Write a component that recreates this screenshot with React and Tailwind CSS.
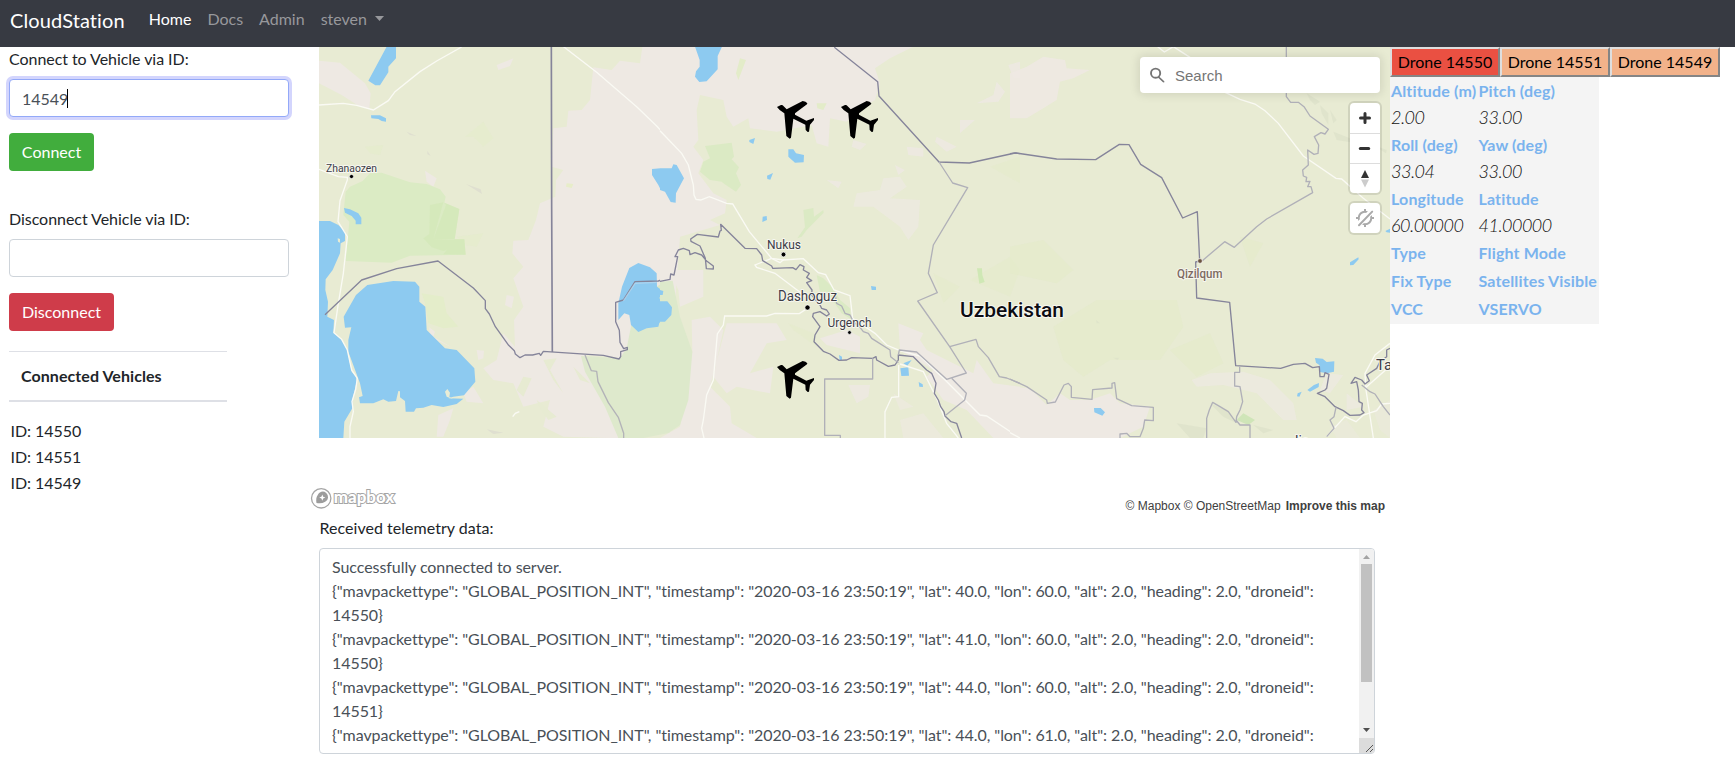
import React from "react";

const WATER = "#8dcaf0";

const telemetry = [
  "Successfully connected to server.",
  '{"mavpackettype": "GLOBAL_POSITION_INT", "timestamp": "2020-03-16 23:50:19", "lat": 40.0, "lon": 60.0, "alt": 2.0, "heading": 2.0, "droneid":',
  "14550}",
  '{"mavpackettype": "GLOBAL_POSITION_INT", "timestamp": "2020-03-16 23:50:19", "lat": 41.0, "lon": 60.0, "alt": 2.0, "heading": 2.0, "droneid":',
  "14550}",
  '{"mavpackettype": "GLOBAL_POSITION_INT", "timestamp": "2020-03-16 23:50:19", "lat": 44.0, "lon": 60.0, "alt": 2.0, "heading": 2.0, "droneid":',
  "14551}",
  '{"mavpackettype": "GLOBAL_POSITION_INT", "timestamp": "2020-03-16 23:50:19", "lat": 44.0, "lon": 61.0, "alt": 2.0, "heading": 2.0, "droneid":',
];

function Plane({ x, y }) {
  return (
    <path
      transform={`translate(${x} ${y})`}
      fill="#000"
      d="M0 18 L12 12 Q17 11 20 16 L29 25 L77 0 Q87 1 91 7 L90 10 L54 37 L54 41 L88 59 L111 51 L111 57 L99 71 L96 92 L92 93 L86 87 L85 71 L49 53 L42 110 L38 113 L28 105 L22 37 L8 27 Z"
    />
  );
}

function MapWest() {
  return (
    <g transform="translate(310 40) scale(.333333)">
      {/* desert tint */}
      <g fill="#eee9e3">
        <path d="M27 62 L90 68 165 130 182 160 178 205 150 200 95 165 27 130Z" />
        <path d="M1000 0 L990 70 930 62 905 90 850 82 840 180 815 210 775 212 770 260 730 265 725 380 760 390 738 420 736 470 690 490 678 540 655 600 610 602 607 640 640 680 610 715 640 800 612 840 615 920 580 880 560 960 520 985 550 1020 610 1030 640 1100 720 1080 700 1160 760 1190 930 1195 905 1110 825 945 910 950 1080 990 1080 0Z" />
        <path d="M345 392 L380 415 370 440 350 425Z M560 75 L610 55 600 78 565 90Z M358 862 L375 875 370 890 430 925 360 890Z M460 1060 L490 1040 520 1090 470 1085Z M385 1125 L430 1105 420 1140 400 1190 380 1190Z" />
        <path d="M500 930 L522 932 520 955 505 960Z M590 765 L612 770 605 805 585 795Z" />
      </g>
      <g fill="#e7ebd2">
        <path d="M640 1010 L665 1015 640 1070 620 1050Z M680 1080 L740 1130 715 1140 690 1105Z M700 960 L740 955 720 990 760 1060 730 1020Z M790 980 L840 1030 810 1020Z" />
        <path d="M770 430 L790 432 785 444 768 440Z" fill="#e7edc9" />
      </g>
      <g fill="#e4edca">
        <path d="M335 760 L400 770 410 820 445 860 400 865 355 850 345 790Z" />
        <path d="M465 290 L520 245 550 295 520 320 490 290Z M165 320 L220 315 210 345 180 340Z M440 590 L520 580 500 620 470 615Z" opacity=".5" />
      </g>
      {/* parks */}
      <path d="M107 455 L120 440 158 423 180 400 215 398 300 427 350 432 390 448 407 470 403 488 448 507 434 598 463 598 467 644 300 647 245 668 107 663 118 545 100 525Z" fill="#dbebc4" />
      <path d="M360 495 L400 487 370 598 432 600 430 622 400 633 365 622 340 595 358 582Z M434 598 L463 598 467 644 400 643Z M434 598 L448 507 403 488 408 495 370 598Z" fill="#d2e8b7" opacity=".65" />
      <path d="M813 948 L930 955 950 925 965 850 1080 790 1080 1178 1000 1194 925 1194 885 1100 825 995Z" fill="#dee9cc" />
      <path d="M1040 740 L1080 715 1080 820 1040 790Z" fill="#dee9c4" />
      {/* lakes */}
      <g fill={WATER}>
        <path d="M230 20 L258 20 258 55 235 80 235 97 210 136 196 136 175 122Z" />
        <path d="M183 226 L210 226 228 235 228 245 215 243 205 237 184 235Z" />
        <path d="M102 504 L120 508 145 520 154 533 154 553 137 553 137 542 125 528 105 518Z" />
        <path d="M27 543 L60 543 85 555 105 575 105 603 92 610 90 640 68 690 47 718 46 750 54 785 52 830 72 840 70 878 95 900 112 930 125 995 138 1010 140 1025 127 1080 127 1105 103 1145 100 1194 27 1194Z" />
        <path d="M172 735 L250 723 315 725 328 740 328 785 346 800 350 870 405 925 440 930 493 985 496 1025 462 1066 430 1070 415 1075 460 1076 440 1092 400 1101 365 1095 340 1103 318 1105 312 1115 287 1115 285 1083 270 1072 270 1054 265 1053 258 1083 235 1085 220 1078 190 1090 150 1090 147 1072 158 1068 150 1030 115 935 115 900 124 862 105 863 101 830 138 765Z" />
        <path d="M1026 387 L1060 384 1080 392 1080 487 1060 465 1045 435 1026 405Z" />
        <path d="M958 684 L985 669 1020 682 1040 700 1041 740 1058 752 1048 775 1080 795 1080 843 1048 848 1045 860 1010 865 985 876 963 855 958 825 943 820 925 840 925 790 936 740Z" />
      </g>
      <path d="M412 1047 L420 1058 418 1070 430 1078 410 1070 405 1055Z" fill="#e9ecd5" />
      <path d="M83 595 L90 597 90 608 84 605Z" fill="#e7ebd2" />
      {/* roads */}
      <g fill="none" stroke="#fafaf4" strokeWidth="4">
        <path d="M27 195 L100 190 140 196 190 210 235 182 255 155 330 95 380 63 455 21" />
        <path d="M758 18 L860 97 980 200 1040 258 1080 302" />
        <path d="M27 388 L85 410 112 412 112 420 90 482 84 545 112 590 100 700 85 790 72 878 95 898 112 930 125 990 142 1015 137 1048 126 1085 130 1115 120 1160 120 1194" />
        <path d="M608 1130 L616 1120 628 1115" />
      </g>
      {/* borders */}
      <g fill="none" stroke="#85849a" strokeWidth="4" strokeLinejoin="round">
        <path d="M724 20 L725 500 727 936" strokeWidth="5" />
        <path d="M45 824 L155 720 260 686 384 663 490 744 526 782 526 806 538 822 556 860 596 916 613 932 616 942 630 953 645 945 668 945 688 940 692 946 700 934 880 946 927 957 932 950 932 935 952 929 952 922 941 926 930 907 928 871 917 845 917 787 940 780 975 725 1045 723 1065 716 1080 718" />
        <path d="M825 945 L844 992 860 994 864 1025 895 1088 925 1132 941 1180 941 1194" stroke="#b3b3b8" />
      </g>
      <path d="M940 783 L975 730 1040 727" fill="none" stroke="#b8d9ef" strokeWidth="4" opacity=".7" />
      <path d="M290 275 L320 288 300 285Z M352 332 L362 348 352 342Z M468 432 L512 448 516 462Z M530 1168 L580 1178 550 1182Z" fill="#dfdfd0" />
    </g>
  );
}

function MapCentral() {
  return (
    <g transform="translate(660 40) scale(.333333)">
      <g fill="#eee9e3">
        <path d="M30 0 L760 20 690 55 645 85 660 130 645 180 590 215 560 245 510 235 505 320 470 310 455 255 350 275 270 265 265 235 220 260 200 230 190 180 120 165 110 210 115 300 100 320 130 360 115 400 160 460 200 480 195 520 150 540 180 555 60 590 30 1000 0 720 0 20Z" />
        <path d="M30 690 L130 690 130 770 60 800 55 750Z M95 840 L150 830 190 870 160 1010 200 1060 230 1040 330 1060 340 980 270 1000 320 910 380 900 350 850 200 850 150 1040 210 1100 215 1150 290 1194 0 1194 60 1160 97 935Z" />
        <path d="M480 895 L560 870 600 890 600 940 500 915Z M715 850 L790 880 780 900 800 930 860 960 940 1000 950 960 1000 1030 1080 1040 1080 1194 1000 1194 920 1110 850 1080 800 1010 820 990 720 930Z" />
        <path d="M590 460 L660 450 670 415 720 410 740 440 690 475 780 480 775 560 745 600 720 560 640 500 580 500Z" opacity=".7" />
        <path d="M1010 125 L1035 155 1015 185 950 190 1000 165Z M1045 75 L1080 65 1080 115 1060 115Z M830 290 L890 320 860 335 825 305Z M900 240 L945 240 900 280Z M740 320 L790 325 790 350 745 345Z M705 375 L735 390 715 405Z M580 300 L620 312 600 330 575 320Z M565 1035 L630 1035 625 1070 590 1090Z M500 420 L545 425 535 445Z" opacity=".8" />
        <path d="M700 1060 L760 1100 720 1110Z M720 1140 L790 1120 850 1194 730 1194Z" opacity=".6" />
      </g>
      <g fill="#e3ecc9">
        <path d="M385 850 L460 880 470 920 400 870Z M930 720 L1050 650 1080 690 1050 770Z M820 700 L900 740 850 790Z M990 380 L1080 350 1080 430Z" opacity=".4" />
        <path d="M240 55 L258 60 235 120 228 100Z M470 190 L500 190 490 210 472 205Z" />
      </g>
      <g fill="#dbeac4">
        <path d="M135 318 L215 308 222 350 215 358 237 382 228 400 243 435 228 455 190 430 185 425 150 420 120 395 130 365 150 355Z" />
        <path d="M430 510 L460 504 462 530 490 510 491 518 440 570 425 590 412 595 435 562Z M470 705 L490 715 520 745 540 780 570 805 573 838 545 820 500 755 480 755Z" />
        <path d="M0 725 L38 722 60 830 97 935 85 1080 60 1155 30 1175 0 1180Z" fill="#dde9cb" />
        <path d="M951 685 L966 685 967 705 974 726 958 731Z" fill="#cfe8b5" />
      </g>
      <g fill={WATER}>
        <path d="M105 20 L186 20 173 48 173 88 140 124 118 126 105 110 108 94 119 80 119 60Z" />
        <path d="M0 385 L35 385 40 373 50 375 72 415 48 460 47 488 32 486 15 455 0 450Z" />
        <path d="M385 328 L400 328 408 340 432 345 431 367 405 368 385 350Z M268 300 L285 294 280 312 268 306Z M321 407 L339 399 331 419 322 417Z M308 530 L320 528 321 540 307 546Z M633 738 L648 740 648 750 635 750Z M537 945 L546 950 546 960 539 960Z M721 985 L745 982 747 1007 724 1008Z M730 970 L755 960 742 977Z M776 1026 L788 1033 789 1041 778 1040Z" />
        <path d="M0 784 L22 784 36 802 34 825 15 845 0 845Z M0 750 L10 753 8 765 0 765Z" />
      </g>
      <g fill="none" stroke="#fafaf4" strokeWidth="4">
        <path d="M0 272 L65 340 85 375 100 435 102 465 108 478 122 480 148 470 200 490 218 492 268 575 335 655 370 660 430 656 475 698 497 704 522 750 570 767 578 835 645 880 680 915 720 932 780 948 850 1015 960 1125 980 1128 1080 1194" />
        <path d="M335 655 L285 675 290 682 345 700 440 772" />
        <path d="M442 805 L418 821 345 820 320 828 194 828 190 855 172 882 160 1020 140 1065 130 1140 125 1165 132 1194" />
        <path d="M716 975 L716 1070 695 1072 675 1115 675 1194 M720 972 L790 995 830 1075 860 1150 895 1194" />
        <path d="M335 655 L360 668 372 658" />
      </g>
      <g fill="none" stroke="#85849a" strokeWidth="4" strokeLinejoin="round">
        <path d="M523 22 L653 125 657 168 837 366 928 369 1065 339 1080 341" />
        <path d="M0 724 L30 718 32 702 42 705 53 650 45 650 55 630 70 625 88 632 90 644 105 638 125 645 140 663 160 678 160 687 139 686 136 655 120 618 93 604 92 597 112 583 175 591 180 573 184 571 182 553 255 625 290 626 305 645 308 662 335 678 338 685 398 683 408 689 420 674 432 680 430 690 448 700 440 712 455 722 440 728 456 750 455 765 480 795 485 805 500 810 508 822 500 828 480 815 460 820 458 830 480 860 465 885 462 905 490 934 510 942 537 961 560 960 575 953 638 955 648 950 650 960 685 979 705 975 715 960 715 945 760 950 790 980 800 990 815 1000 828 1030 823 1060 835 1080 842 1100 852 1115 855 1128 873 1145 890 1150 905 1194" />
        <g stroke="#b0b0b8">
          <path d="M837 366 L878 429 923 443 820 615 805 700 832 758 773 783 869 920 919 999 860 1018 770 936 718 930 715 945" />
          <path d="M869 920 L948 898 955 920 985 953 1018 1010 1040 1014 1080 1030" />
          <path d="M875 1015 L919 1060 914 1080 855 1127" />
          <path d="M638 955 L638 1017 494 1017 494 1186 541 1186 541 1194" />
          <path d="M525 760 L530 790 545 798 555 820 570 825 580 845 600 862 610 875 625 880 635 895 690 930 692 950 715 968" />
        </g>
      </g>
    </g>
  );
}

function MapEast() {
  return (
    <g transform="translate(1010 40) scale(.333333)">
      <g fill="#eee9e3">
        <path d="M0 100 L50 80 100 50 165 60 170 85 240 90 190 115 150 125 140 180 100 205 50 235 0 235Z" opacity=".85" />
        <path d="M0 1040 L60 1045 110 1095 150 1060 180 1080 240 1080 300 1060 330 1090 420 1100 400 1160 330 1194 0 1194Z" />
        <path d="M545 1020 L600 1000 700 995 780 1020 850 1090 860 1140 820 1140 740 1060 640 1035 560 1040Z M950 1000 L1000 1005 960 1060 930 1050Z M1010 1060 L1060 1100 1010 1110Z" opacity=".7" />
        <path d="M1090 1110 L1140 1080 1140 1194 1110 1170Z M960 1160 L1010 1140 1050 1194 980 1194Z" opacity=".4" />
      </g>
      <g fill="#e3ecc8">
        <path d="M0 620 L100 600 190 690 140 730 0 700Z M130 860 L260 780 500 780 520 860 450 960 300 960 220 1010 160 960Z M480 930 L600 880 640 970 560 1010Z M690 590 L760 610 720 680Z" opacity=".5" />
      </g>
      <g fill="#dadfc8">
        <path d="M890 160 L930 185 915 195 900 180Z M930 195 L955 220 955 255 935 220Z M960 210 L980 240 970 250Z M970 275 L1020 295 1040 310 980 300Z M1090 315 L1130 330 1128 340Z M500 1150 L590 1165 580 1194 540 1194Z M600 1090 L650 1110 680 1150 640 1130Z M730 1155 L790 1170 760 1180Z M258 840 L270 850 260 850Z M310 953 L328 953 322 960Z" opacity=".6" />
        <path d="M680 1140 L700 1120 735 1140 715 1155Z" fill="#cfe5b8" />
      </g>
      <g fill={WATER}>
        <path d="M915 954 L938 956 950 966 973 964 972 995 950 1000 930 996 928 975 918 968Z" />
        <path d="M252 1104 L272 1104 285 1117 277 1127 253 1117Z M863 1060 L875 1055 868 1070 861 1069Z M892 1050 L912 1035 927 1029 926 1041 900 1055Z M1020 667 L1045 652 1046 658 1030 675 1020 676Z M1126 573 L1140 566 1140 578 1130 577Z" />
      </g>
      <g fill="none" stroke="#fafaf4" strokeWidth="4">
        <path d="M443 20 L463 36 490 20 540 52" />
        <path d="M620 145 L690 178 735 192 765 212 805 250 880 348 978 415 995 417 1060 475 1140 537" />
        <path d="M950 1190 L1005 1130 1038 1145 1060 1125 1100 1112 1115 1092 1140 1090 M1140 910 L1095 945 1065 1000 1068 1050 1090 1194 M1065 1045 L1140 978" />
        <path d="M0 1178 L30 1194" />
      </g>
      <g fill="none" stroke="#85849a" strokeWidth="4" strokeLinejoin="round">
        <path d="M0 341 L18 339 140 357 257 359 328 313 357 314 392 373 455 413 518 534 562 515 569 663 557 666 560 774 659 787 677 977 812 985 850 973 885 970 908 983 928 980 930 1010 942 1010 945 998 957 1003 950 1045 945 1050 922 1060 945 1070 975 1100 1000 1112 1020 1126 1050 1125 1062 1118 1055 1110 1057 1090 1047 1085 1045 1050 1040 1025 1023 1030 1035 1012 1055 1020 1065 1032 1078 1022 1070 1005 1100 985 1110 965 1130 950 1130 930 1140 925" />
        <g stroke="#b0b0b8">
          <path d="M829 20 L829 170 842 187 865 187 882 200 900 228 955 268 945 282 933 278 913 290 926 315 924 340 912 343 893 330 895 375 878 390 880 408 890 412 888 425 900 424 893 440 903 440 908 458 770 537 740 560 673 622 644 605 577 662" />
          <path d="M0 1017 L50 1040 110 1080 112 1090 136 1086 162 1035 175 1030 184 1040 184 1072 246 1078 248 1049 306 1044 306 1030 314 1028 320 1076 365 1097 430 1102 430 1142 404 1140 400 1165 390 1190 360 1190 350 1180 330 1182 330 1194" />
          <path d="M689 980 L689 997 674 997 674 1038 690 1040 698 1085 690 1110 680 1130 678 1147 655 1115 630 1100 608 1087 598 1110 590 1135 590 1194 M678 1140 L690 1155 720 1155 720 1194" />
          <path d="M978 1102 L972 1130 960 1140 972 1165 950 1190 M1055 1035 L1080 1055 1095 1062 1110 1085 1120 1100 1140 1125" />
        </g>
      </g>
    </g>
  );
}

function MapCanvas() {
  return (
    <svg className="block h-[391px] w-[1071px]" viewBox="319 47 1071 391">
      <rect x="319" y="47" width="1071" height="391" fill="#e8ebd3" />
      <MapWest />
      <MapCentral />
      <MapEast />
      <g
        fontFamily="Roboto, 'Open Sans', sans-serif"
        fill="#3c3c46"
        stroke="#f7f7f0"
        strokeWidth="2"
        strokeLinejoin="round"
        paintOrder="stroke"
      >
        <text x="326" y="171.500" fontSize="11.500" textLength="51" lengthAdjust="spacingAndGlyphs">Zhanaozen</text>
        <text x="767" y="248.500" fontSize="13.500" textLength="34" lengthAdjust="spacingAndGlyphs">Nukus</text>
        <text x="778" y="301" fontSize="14.500" textLength="59" lengthAdjust="spacingAndGlyphs">Dashoguz</text>
        <text x="827.500" y="327" fontSize="13" textLength="44" lengthAdjust="spacingAndGlyphs">Urgench</text>
        <text x="1177" y="278" fontSize="12.500" fontWeight="500" fill="#7d6a62" textLength="45.500" lengthAdjust="spacingAndGlyphs">Qizilqum</text>
        <text x="1376" y="369.500" fontSize="15">Ta</text>
        <text x="1295" y="446" fontSize="14">lis</text>
        <text x="960" y="317" fontSize="21" fontWeight="500" fill="#0c0c12" textLength="104" lengthAdjust="spacingAndGlyphs">Uzbekistan</text>
      </g>
      <g stroke="#fff" strokeWidth=".7">
        <circle cx="351.500" cy="176.500" r="2.100" />
        <circle cx="783.500" cy="254.500" r="2.400" />
        <circle cx="807.500" cy="307.500" r="2.600" />
        <circle cx="849.500" cy="332.500" r="1.900" />
        <circle cx="1200" cy="261" r="2.400" fill="#6b5440" />
      </g>
      <g transform="translate(660 40) scale(.333333)">
        <Plane x={351} y={183} />
        <Plane x={543} y={183} />
        <Plane x={351} y={963} />
      </g>
    </svg>
  );
}

function MapControls() {
  return (
    <div className="absolute right-[10px] top-[10px] flex flex-col items-end">
      <div className="flex h-9 w-60 items-center rounded bg-white pl-[9px] shadow-[0_0_10px_2px_rgba(0,0,0,.1)]">
        <svg className="mt-px h-[18px] w-[18px]" viewBox="0 0 18 18" fill="#757575">
          <circle cx="6.600" cy="6.200" r="4.600" fill="none" stroke="#757575" strokeWidth="1.900" />
          <path d="M9.600 9 L15.300 14.200 Q15.800 15.800 14 15.300 L8.600 10.200Z" />
        </svg>
        <span className="ml-[8px] mt-[2px] font-['Liberation_Sans',sans-serif] text-[15px] leading-5 text-[#757575]">Search</span>
      </div>
      <div className="mt-[10px] flex w-[30px] flex-col rounded bg-white shadow-[0_0_0_2px_rgba(0,0,0,.1)]">
        <svg className="h-[30px] w-[30px]" viewBox="0 0 30 30" stroke="#333" strokeWidth="3" strokeLinecap="round">
          <path d="M10.500 15 H19.500 M15 10.500 V19.500" />
        </svg>
        <svg className="h-[30px] w-[30px] border-t border-[#ddd]" viewBox="0 0 30 29" stroke="#333" strokeWidth="3" strokeLinecap="round">
          <path d="M10.300 14.500 H18.700" />
        </svg>
        <svg className="h-[30px] w-[30px] border-t border-[#ddd]" viewBox="0 0 30 29">
          <path d="M11 14 L15 6 L19 14Z" fill="#333" />
          <path d="M11 15.500 L15 23.500 L19 15.500Z" fill="#ccc" />
        </svg>
      </div>
      <svg className="mt-[10px] h-[30px] w-[30px] rounded bg-white shadow-[0_0_0_2px_rgba(0,0,0,.1)]" viewBox="0 0 30 30" fill="none" stroke="#aaa" strokeWidth="2">
        <circle cx="15" cy="15" r="6.300" />
        <path d="M15 6 V9 M15 21 V24 M6 15 H9 M21 15 H24" />
        <path d="M8 22 L22 8" stroke="#fff" strokeWidth="5.500" />
        <path d="M9 22.200 L22.200 8.600" strokeLinecap="round" />
      </svg>
    </div>
  );
}

function MapboxLogo() {
  return (
    <svg className="-ml-[9px] mb-[2px] h-6 w-[88px]" viewBox="0 0 88 24">
      <circle cx="11.200" cy="12.300" r="9.700" fill="#fff" stroke="#a5a5a5" strokeWidth="1.300" />
      <path d="M6.500 17 Q5.600 12 7.600 9.200 A5.400 5.400 0 1 1 15.200 15.800 Q11.500 18 6.500 17Z" fill="#9c9c9c" />
      <path d="M12.300 8.500 L13.200 10.700 15.400 11.600 13.200 12.500 12.300 14.700 11.400 12.500 9.200 11.600 11.400 10.700Z" fill="#fff" />
      <text x="23.800" y="16.500" fontFamily="Lato, sans-serif" fontWeight="900" fontSize="17" fill="#fff" stroke="#a5a5a5" strokeWidth="2" paintOrder="stroke" textLength="60.500" lengthAdjust="spacingAndGlyphs">
        mapbox
      </text>
    </svg>
  );
}

function Navbar() {
  return (
    <nav className="flex h-[47px] items-start bg-[#373a42] pl-[10px] text-white">
      <span className="mt-[5px] text-[20px] leading-[30px] tracking-[.1px]">CloudStation</span>
      <div className="ml-6 mt-[7px] flex gap-4 leading-6 text-[#97989c]">
        <span className="text-white">Home</span>
        <span>Docs</span>
        <span>Admin</span>
        <span className="flex">
          steven
          <svg className="ml-2 mt-[9px] h-[5px] w-[9px]" viewBox="0 0 9 5">
            <path d="M0 0 H9 L4.500 5Z" fill="currentColor" />
          </svg>
        </span>
      </div>
    </nav>
  );
}

function Sidebar() {
  return (
    <aside className="flex w-[319px] shrink-0 flex-col items-start pl-[9px]">
      <label className="leading-6 tracking-[-.05px]">Connect to Vehicle via ID:</label>
      <div className="mt-2 flex h-[38px] w-[280px] items-center rounded border border-[#93a9f8] bg-white pl-3 pt-px text-[#495057] shadow-[0_0_0_3px_#d3d5fd]">
        14549
        <span className="-ml-px -mt-px h-[19px] w-px bg-black" />
      </div>
      <button className="mt-4 h-[38px] w-[85px] rounded bg-[#41ad3d] text-white">Connect</button>
      <label className="mt-9 leading-6 tracking-[-.04px]">Disconnect Vehicle via ID:</label>
      <div className="mt-2 h-[38px] w-[280px] rounded border border-[#ced4da] bg-white" />
      <button className="mt-4 h-[38px] w-[105px] rounded bg-[#cf3c4a] text-white">Disconnect</button>
      <div className="mt-5 flex h-[51px] w-[218px] items-center border-b-2 border-t border-[#dee0e6] pl-3 font-bold tracking-[.07px]">
        Connected Vehicles
      </div>
      <ul className="mt-4 pl-[1.500px] leading-[26px] tracking-[-.05px]">
        <li>ID: 14550</li>
        <li>ID: 14551</li>
        <li>ID: 14549</li>
      </ul>
    </aside>
  );
}

function Telemetry() {
  return (
    <section>
      <div className="mt-1 pl-[.5px] leading-6 tracking-[.03px]">Received telemetry data:</div>
      <div className="mt-2 flex h-[206px] w-[1056px] overflow-hidden rounded border border-[#ced4da]">
        <div className="h-full flex-1 overflow-hidden whitespace-nowrap pl-3 pt-[6px] leading-6 tracking-[-.066px] text-[#495057]">
          {telemetry.map((line, i) => (
            <div key={i}>{line}</div>
          ))}
        </div>
        <div className="flex w-[15px] flex-col items-center bg-[#f1f1f1]">
          <svg className="h-[15px] w-[15px]" viewBox="0 0 15 15">
            <path d="M4 10 L7.500 6 L11 10Z" fill="#a3a3a3" />
          </svg>
          <div className="h-[118px] w-[11px] bg-[#c1c1c1]" />
          <svg className="mt-auto h-[15px] w-[15px]" viewBox="0 0 15 15">
            <path d="M4 5 H11 L7.500 9Z" fill="#505050" />
          </svg>
          <svg className="h-[15px] w-[15px] bg-[#dcdcdc]" viewBox="0 0 15 15" stroke="#555" strokeWidth="1">
            <path d="M7 14 L14 7 M11 14 L14 11" />
          </svg>
        </div>
      </div>
    </section>
  );
}

const readings = [
  [["Altitude (m)", "2.00"], ["Pitch (deg)", "33.00"]],
  [["Roll (deg)", "33.04"], ["Yaw (deg)", "33.00"]],
  [["Longitude", "60.00000"], ["Latitude", "41.00000"]],
  [["Type"], ["Flight Mode"]],
  [["Fix Type"], ["Satellites Visible"]],
  [["VCC"], ["VSERVO"]],
];

function DronePanel() {
  return (
    <aside className="w-[345px]">
      <div className="flex text-black">
        <button className="h-[30px] w-[110px] border-2 border-b-[#858585] border-l-[#dedede] border-r-[#858585] border-t-[#dedede] bg-[#ea5042]">Drone 14550</button>
        <button className="h-[30px] w-[110px] border-2 border-b-[#858585] border-l-[#dedede] border-r-[#858585] border-t-[#dedede] bg-[#f2b28a]">Drone 14551</button>
        <button className="h-[30px] w-[110px] border-2 border-b-[#858585] border-l-[#dedede] border-r-[#858585] border-t-[#dedede] bg-[#f2b28a]">Drone 14549</button>
      </div>
      <div className="flex w-[209px] flex-col bg-[#f4f4f4] pb-px pl-px">
        {readings.map((row, i) => (
          <div key={i} className="flex">
            {row.map(([label, value], j) => (
              <div key={label} className={j === 0 ? "w-[87.5px] whitespace-nowrap" : "whitespace-nowrap"}>
                <div className="h-7 font-bold leading-7 tracking-[.15px] text-[#7ab3ee]">{label}</div>
                {value && <div className="h-[26px] text-[18px] font-light italic leading-6 tracking-[-.5px] text-[#111]">{value}</div>}
              </div>
            ))}
          </div>
        ))}
      </div>
    </aside>
  );
}

export default function App() {
  return (
    <div className="h-[783px] w-[1735px] overflow-hidden bg-white font-[Lato,sans-serif] text-[16px] text-[#212529] [font-variant-ligatures:none]">
      <Navbar />
      <div className="flex">
        <Sidebar />
        <main className="w-[1071px] shrink-0">
          <div className="relative">
            <MapCanvas />
            <MapControls />
          </div>
          <div className="flex h-[74px] items-end justify-between">
            <MapboxLogo />
            <div className="-mb-px flex h-[14px] items-center gap-[5px] pr-[5px] font-['Liberation_Sans',sans-serif] text-[12px] leading-[14px] text-[#404040]">
              <span>© Mapbox © OpenStreetMap</span>
              <b>Improve this map</b>
            </div>
          </div>
          <Telemetry />
        </main>
        <DronePanel />
      </div>
    </div>
  );
}
